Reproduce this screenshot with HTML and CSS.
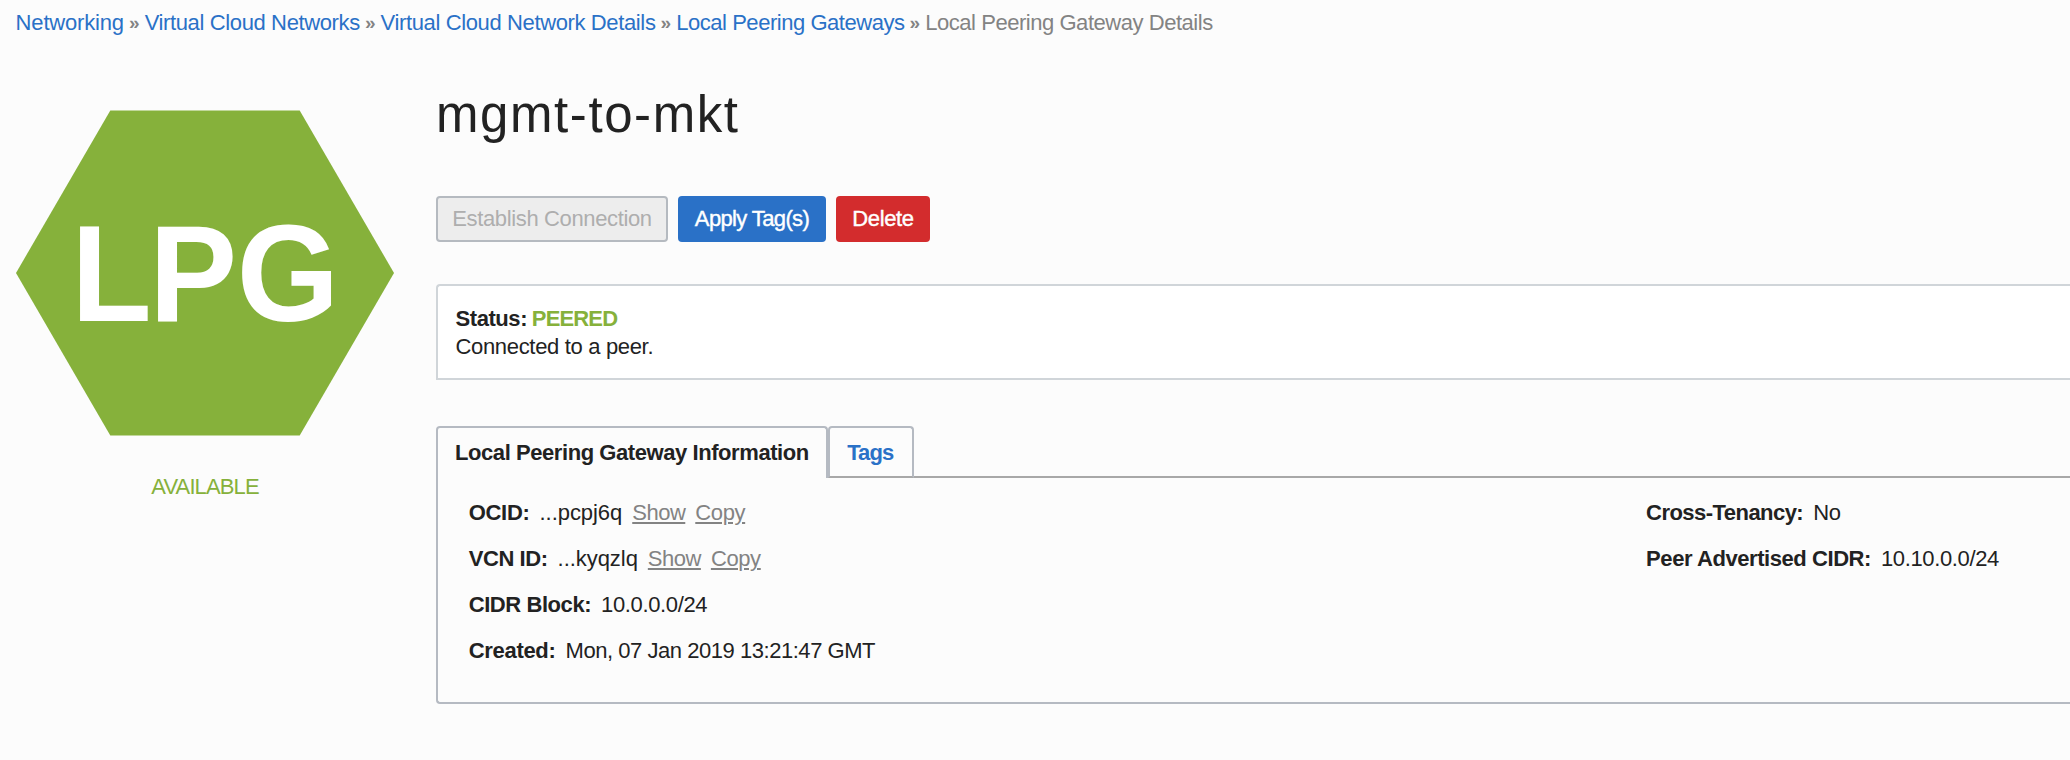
FILE: index.html
```html
<!DOCTYPE html>
<html lang="en">
<head>
<meta charset="utf-8">
<title>Local Peering Gateway Details</title>
<link rel="stylesheet" href="styles.css">
</head>
<body>
<nav class="breadcrumb">
  <a class="crumb crumb-root" href="#">Networking</a><span class="sep">»</span>
  <a class="crumb" href="#">Virtual Cloud Networks</a><span class="sep">»</span>
  <a class="crumb" href="#">Virtual Cloud Network Details</a><span class="sep">»</span>
  <a class="crumb crumb-tight" href="#">Local Peering Gateways</a><span class="sep">»</span>
  <span class="crumb crumb-tight current">Local Peering Gateway Details</span>
</nav>
<div class="layout">
  <aside class="side">
    <svg class="hexagon" viewBox="0 0 378 326" width="378" height="326">
      <polygon points="0,163 94.3,0.4 283.7,0.4 378,163 283.7,325.6 94.3,325.6" fill="#86b13b"/>
      <text class="hexagon-label" transform="scale(0.957 1)" x="57.7 139.2 230.8" y="210.7">LPG</text>
    </svg>
    <div class="state">AVAILABLE</div>
  </aside>
  <main class="main">
    <h1 class="title">mgmt-to-mkt</h1>
    <div class="actions">
      <button class="btn btn-disabled" disabled>Establish Connection</button>
      <button class="btn btn-primary">Apply Tag(s)</button>
      <button class="btn btn-danger">Delete</button>
    </div>
    <section class="status">
      <div class="status-line"><b>Status:</b> <b class="peered">PEERED</b></div>
      <div class="status-text">Connected to a peer.</div>
    </section>
    <div class="tabs">
      <div class="tab tab-active">Local Peering Gateway Information</div>
      <div class="tab tab-tags"><a href="#">Tags</a></div>
      <div class="tab-rest"></div>
    </div>
    <section class="panel">
      <div class="column column-main">
        <div class="row"><b class="k-ocid">OCID:</b><span class="v-id">...pcpj6q</span><a class="show" href="#">Show</a><a class="copy" href="#">Copy</a></div>
        <div class="row"><b>VCN ID:</b><span class="v-id">...kyqzlq</span><a class="show" href="#">Show</a><a class="copy" href="#">Copy</a></div>
        <div class="row"><b>CIDR Block:</b><span>10.0.0.0/24</span></div>
        <div class="row"><b class="k-created">Created:</b><span class="v-date">Mon, 07 Jan 2019 13:21:47 GMT</span></div>
      </div>
      <div class="column">
        <div class="row"><b class="k-cross">Cross-Tenancy:</b><span>No</span></div>
        <div class="row"><b>Peer Advertised CIDR:</b><span>10.10.0.0/24</span></div>
      </div>
    </section>
  </main>
</div>
</body>
</html>
```

FILE: styles.css
```css
* { box-sizing: border-box; }
body {
  margin: 0;
  height: 760px;
  background: #fcfcfc;
  color: #222;
  font: 22px/28px "Liberation Sans", Arial, sans-serif;
  letter-spacing: -0.37px;
}
a { color: #2a71c7; text-decoration: none; }
b { letter-spacing: -0.43px; }

.breadcrumb { display: flex; padding: 9px 0 0 15.6px; height: 36px; white-space: nowrap; color: #838383; }
.crumb-root { letter-spacing: -0.17px; }
.crumb-tight { letter-spacing: -0.46px; }
.sep { width: 20.7px; text-align: center; font-size: 19px; font-weight: 700; letter-spacing: 0; }

.layout { display: flex; gap: 42px; padding-left: 16px; }
.side { width: 378px; flex: none; padding-top: 74px; text-align: center; }
.hexagon { display: block; }
.hexagon-label { font-size: 137.6px; font-weight: 700; fill: #fff; letter-spacing: 0; }
.state { margin-top: 37px; color: #86b13b; letter-spacing: -0.88px; }

.main { flex: 1; min-width: 0; }
.title { margin: 0; padding: 49px 0 0; height: 160px; font-size: 51px; line-height: 60px; font-weight: 400; letter-spacing: 1.58px; }
.actions { display: flex; gap: 10px; }
.btn {
  height: 46px;
  border: 0;
  border-radius: 4px;
  padding: 0;
  font: 22px/28px "Liberation Sans", Arial, sans-serif;
  letter-spacing: -0.36px;
  white-space: nowrap;
}
.btn-disabled { width: 232px; border: 2px solid #b5bac0; background: #ededed; color: #aeaeae; }
.btn-primary { width: 148px; background: #2a71c7; color: #fff; letter-spacing: -0.63px; -webkit-text-stroke: 0.4px #fff; }
.btn-danger { width: 94px; background: #d32c2d; color: #fff; -webkit-text-stroke: 0.4px #fff; }

.status {
  margin-top: 42px;
  height: 96px;
  border: 2px solid #d0d5d9;
  border-right: 0;
  border-radius: 4px 0 0 0;
  background: #fff;
  padding: 19px 17.5px;
}
.status-text { letter-spacing: -0.33px; }
.peered { margin-left: -1px; color: #86b13b; letter-spacing: -0.85px; }

.tabs { display: flex; margin-top: 46px; height: 52px; font-weight: 700; }
.tab { border: 2px solid #b5bac2; border-radius: 4px 4px 0 0; padding-top: 11px; white-space: nowrap; }
.tab-active { width: 392px; border-bottom: 0; padding-left: 17px; letter-spacing: -0.43px; }
.tab-tags { width: 86px; border-bottom-color: #a8a8a8; padding-left: 17.2px; letter-spacing: -0.9px; }
.tab-rest { flex: 1; border-bottom: 2px solid #a8a8a8; }

.panel {
  display: flex;
  height: 226px;
  border: 2px solid #b5bac2;
  border-top: 0;
  border-right: 0;
  border-radius: 0 0 0 4px;
  padding: 21px 0 0 30.7px;
}
.column { flex: 1; min-width: 0; display: flex; flex-direction: column; gap: 18px; }
.column-main { flex: 0 0 1177.4px; }
.row { display: flex; gap: 10px; height: 28px; white-space: nowrap; }
.k-ocid { letter-spacing: -0.3px; }
.k-created { letter-spacing: -0.3px; }
.k-cross { letter-spacing: -0.54px; }
.v-id { letter-spacing: -0.05px; }
.v-date { letter-spacing: -0.46px; }
.show, .copy { color: #838383; text-decoration: underline; text-decoration-thickness: 2px; text-underline-offset: 2px; text-decoration-skip-ink: auto; }
.show { letter-spacing: -0.5px; }
```
